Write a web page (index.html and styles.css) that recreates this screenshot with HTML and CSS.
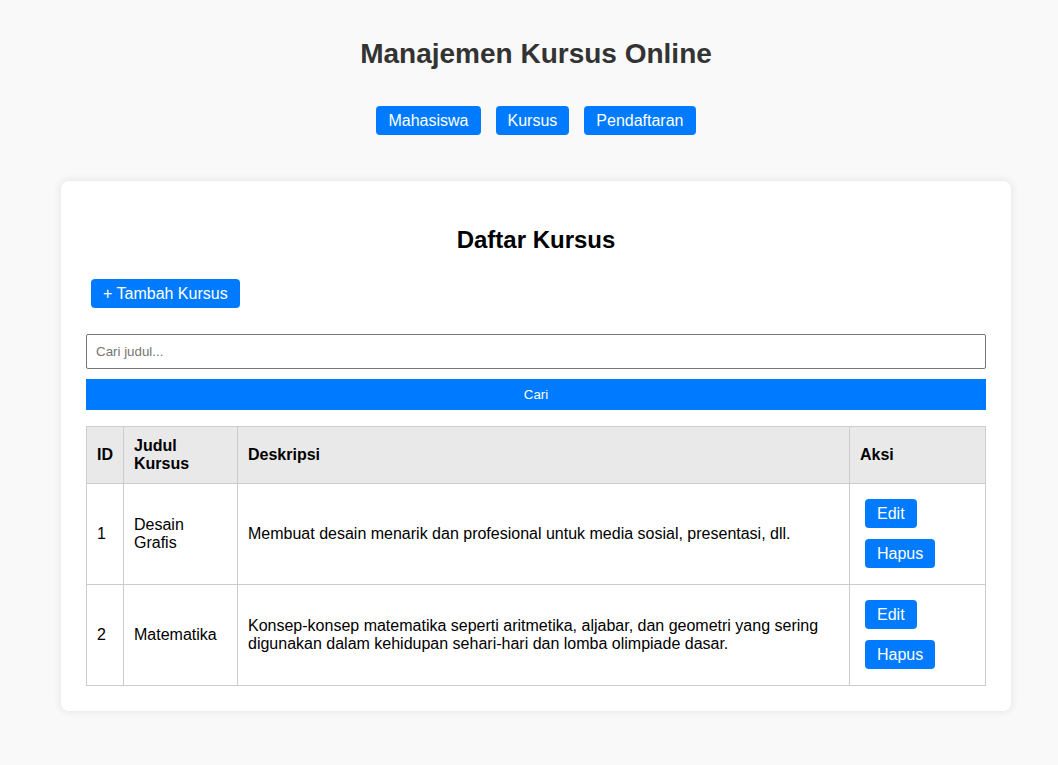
FILE: index.html
```html
<!DOCTYPE html>
<html lang="id">
<head>
<meta charset="utf-8">
<title>Manajemen Kursus Online</title>
<link rel="stylesheet" href="styles.css">
</head>
<body>
<header class="site-header">
  <h1 class="site-title">Manajemen Kursus Online</h1>
  <nav class="site-nav">
    <a class="btn" href="#">Mahasiswa</a>
    <a class="btn" href="#">Kursus</a>
    <a class="btn" href="#">Pendaftaran</a>
  </nav>
</header>
<main class="card">
  <h2 class="card-title">Daftar Kursus</h2>
  <div class="toolbar"><a class="btn btn-add" href="#">+ Tambah Kursus</a></div>
  <form class="search">
    <input class="search-input" type="text" placeholder="Cari judul...">
    <button class="search-btn" type="button">Cari</button>
  </form>
  <table class="data-table">
    <thead>
      <tr>
        <th class="col-id">ID</th>
        <th class="col-judul">Judul Kursus</th>
        <th class="col-desc">Deskripsi</th>
        <th class="col-aksi">Aksi</th>
      </tr>
    </thead>
    <tbody>
      <tr>
        <td>1</td>
        <td>Desain Grafis</td>
        <td>Membuat desain menarik dan profesional untuk media sosial, presentasi, dll.</td>
        <td><a class="btn btn-row" href="#">Edit</a> <a class="btn btn-row" href="#">Hapus</a></td>
      </tr>
      <tr>
        <td>2</td>
        <td>Matematika</td>
        <td>Konsep-konsep matematika seperti aritmetika, aljabar, dan geometri yang sering digunakan dalam kehidupan sehari-hari dan lomba olimpiade dasar.</td>
        <td><a class="btn btn-row" href="#">Edit</a> <a class="btn btn-row" href="#">Hapus</a></td>
      </tr>
    </tbody>
  </table>
</main>
</body>
</html>
```

FILE: styles.css
```css
* { box-sizing: border-box; }

body {
  margin: 0;
  padding: 0 0 60px 14px;
  background: #f9f9f9;
  font-family: "Liberation Sans", Arial, sans-serif;
  color: #000;
}

.site-header {
  text-align: center;
}

.site-title {
  margin: 38px 0 0;
  font-size: 28px;
  line-height: 32px;
  font-weight: bold;
  color: #333;
}

.site-nav {
  display: flex;
  justify-content: center;
  gap: 15px;
  margin-top: 36px;
}

.btn {
  display: inline-block;
  background: #007bff;
  color: #fff;
  text-decoration: none;
  font-size: 16px;
  line-height: 19px;
  padding: 5px 12px;
  border-radius: 4px;
}

.card {
  width: 950px;
  margin: 46px auto 0;
  background: #fff;
  border-radius: 8px;
  padding: 25px;
  box-shadow: 0 0 10px rgba(0, 0, 0, 0.1);
}

.card-title {
  margin: 20px 0;
  text-align: center;
  font-size: 24px;
  line-height: 28px;
}

.toolbar {
  margin-bottom: 21px;
}

.btn-add {
  margin: 5px;
}

.search {
  display: flex;
  flex-direction: column;
  gap: 10px;
  margin: 0 0 16px;
}

.search-input {
  height: 35px;
  padding: 0 9px;
  border: 1px solid #767676;
  border-radius: 2px;
  font-family: "Liberation Sans", Arial, sans-serif;
  font-size: 13.33px;
  color: #000;
}

.search-input::placeholder {
  color: #757575;
}

.search-btn {
  height: 31px;
  border: none;
  background: #007bff;
  color: #fff;
  font-family: "Liberation Sans", Arial, sans-serif;
  font-size: 13.33px;
}

.data-table {
  width: 899px;
  border-collapse: collapse;
  table-layout: fixed;
  font-size: 16px;
}

.data-table th,
.data-table td {
  border: 1px solid #ccc;
  padding: 10px;
  text-align: left;
  vertical-align: middle;
}

.data-table th {
  background: #e9e9e9;
  font-weight: bold;
}

.col-id { width: 37px; }
.col-judul { width: 114px; }
.col-desc { width: 612px; }
.col-aksi { width: 136px; }

.btn-row {
  margin: 5px 5px 6px;
}
```
